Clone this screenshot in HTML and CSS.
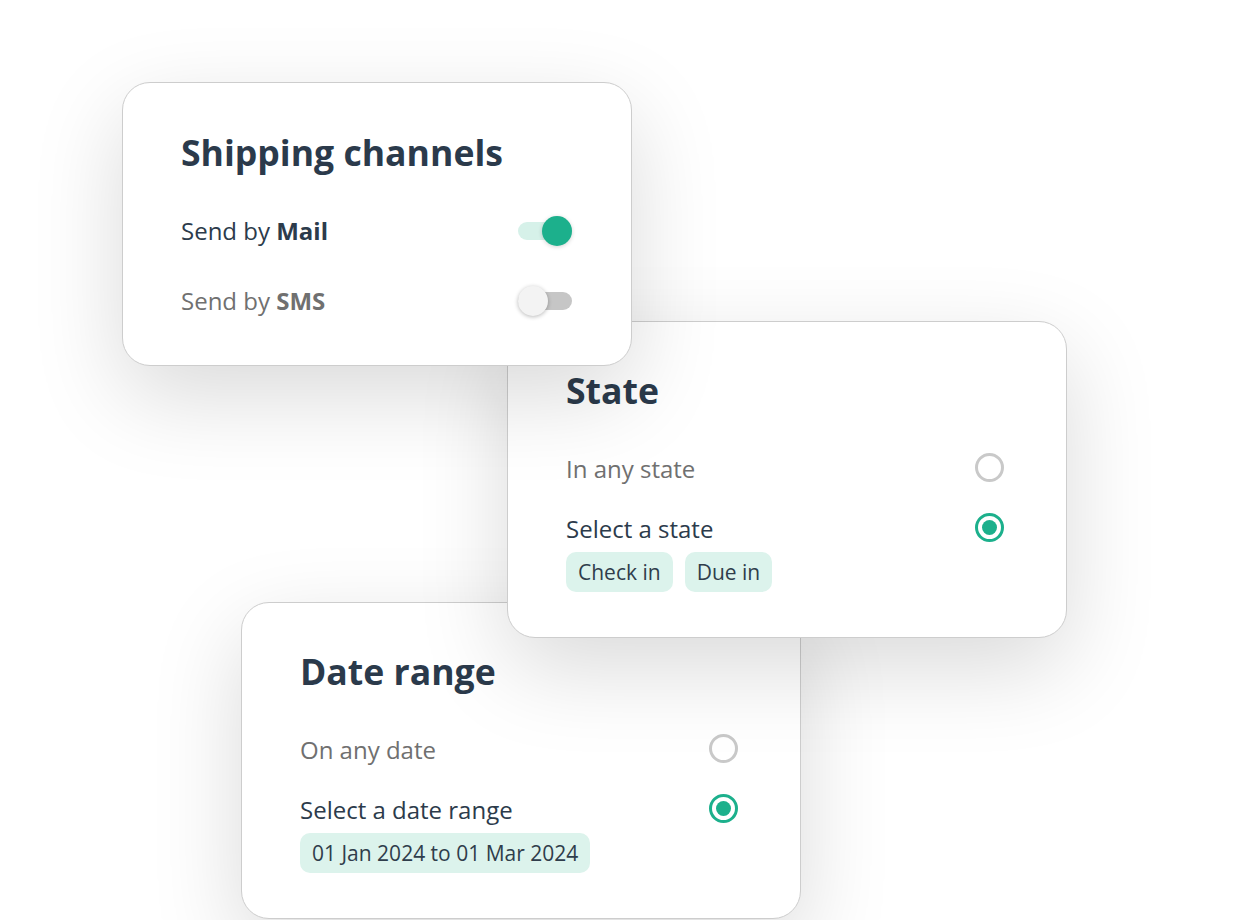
FILE: index.html
```html
<!DOCTYPE html>
<html lang="en">
<head>
<meta charset="utf-8">
<title>Filters</title>
<link rel="stylesheet" href="styles.css">
</head>
<body>
<div class="canvas">
  <section class="card card-shipping">
    <h2 class="card-title">Shipping channels</h2>
    <div class="toggle-list">
      <div class="toggle-row">
        <span class="label">Send by <b>Mail</b></span>
        <span class="toggle on"><span class="track"></span><span class="knob"></span></span>
      </div>
      <div class="toggle-row muted">
        <span class="label">Send by <b>SMS</b></span>
        <span class="toggle off"><span class="track"></span><span class="knob"></span></span>
      </div>
    </div>
  </section>

  <section class="card card-state">
    <h2 class="card-title">State</h2>
    <div class="option-list">
      <div class="option muted">
        <span class="label">In any state</span>
        <span class="radio"></span>
      </div>
      <div class="option-group">
        <div class="option">
          <span class="label">Select a state</span>
          <span class="radio checked"></span>
        </div>
        <div class="chips">
          <span class="chip">Check in</span>
          <span class="chip">Due in</span>
        </div>
      </div>
    </div>
  </section>

  <section class="card card-date">
    <h2 class="card-title">Date range</h2>
    <div class="option-list">
      <div class="option muted">
        <span class="label">On any date</span>
        <span class="radio"></span>
      </div>
      <div class="option-group">
        <div class="option">
          <span class="label">Select a date range</span>
          <span class="radio checked"></span>
        </div>
        <div class="chips">
          <span class="chip">01 Jan 2024 to 01 Mar 2024</span>
        </div>
      </div>
    </div>
  </section>
</div>
</body>
</html>
```

FILE: styles.css
```css
* { box-sizing: border-box; }

html, body {
  margin: 0;
  padding: 0;
  background: #ffffff;
}

body {
  font-family: "Open Sans", "Noto Sans", sans-serif;
  color: #2c3b4b;
}

.canvas {
  position: relative;
  width: 1246px;
  height: 920px;
  overflow: hidden;
}

.card {
  position: absolute;
  background: #ffffff;
  border: 1px solid #cdcdcd;
  border-radius: 28px;
  box-shadow: 0 30px 90px rgba(0, 0, 0, 0.15);
  display: flex;
  flex-direction: column;
  gap: 42px;
}

.card-shipping {
  left: 122px;
  top: 82px;
  width: 510px;
  padding: 49px 59px 48px 58px;
  z-index: 3;
}

.card-state {
  left: 507px;
  top: 321px;
  width: 560px;
  padding: 48px 62px 45px 58px;
  z-index: 2;
}

.card-date {
  left: 241px;
  top: 602px;
  width: 560px;
  padding: 48px 62px 45px 58px;
  z-index: 1;
}

.card-title {
  margin: 0;
  font-size: 35.6px;
  line-height: 41px;
  font-weight: 700;
  color: #2b3a4b;
}

.label {
  font-size: 24px;
  line-height: 32px;
}

.label b {
  font-weight: 700;
}

.muted .label {
  color: #707070;
}

/* toggles */
.toggle-list {
  display: flex;
  flex-direction: column;
  gap: 38px;
}

.toggle-row {
  display: flex;
  align-items: center;
  justify-content: space-between;
  height: 32px;
}

.toggle {
  position: relative;
  width: 54px;
  height: 30px;
  flex: none;
}

.toggle .track {
  position: absolute;
  left: 0;
  right: 0;
  top: 6px;
  height: 18px;
  border-radius: 9px;
}

.toggle .knob {
  position: absolute;
  top: 0;
  width: 30px;
  height: 30px;
  border-radius: 50%;
}

.toggle.on .track { background: #d6f1e9; }
.toggle.on .knob {
  right: 0;
  background: #1cb08c;
  box-shadow: 0 1px 4px rgba(0, 0, 0, 0.18);
}

.toggle.off .track { background: #c6c6c6; }
.toggle.off .knob {
  left: 0;
  background: #f3f3f3;
  box-shadow: 0 1px 4px rgba(0, 0, 0, 0.28);
}

/* radios */
.option-list {
  display: flex;
  flex-direction: column;
  gap: 28px;
}

.option-group {
  display: flex;
  flex-direction: column;
  gap: 7px;
}

.option {
  display: flex;
  align-items: center;
  justify-content: space-between;
  height: 32px;
}

.radio {
  width: 29px;
  height: 29px;
  border-radius: 50%;
  border: 3px solid #c9c9c9;
  flex: none;
  margin-top: -4px;
  display: flex;
  align-items: center;
  justify-content: center;
}

.radio.checked {
  border: 3px solid #1cb08c;
}

.radio.checked::after {
  content: "";
  width: 15px;
  height: 15px;
  border-radius: 50%;
  background: #1cb08c;
}

.chips {
  display: flex;
  gap: 12px;
}

.chip {
  height: 40px;
  padding: 0 12px;
  border-radius: 10px;
  background: #dcf3ec;
  color: #2f3d4b;
  font-size: 21px;
  line-height: 40px;
}
```
